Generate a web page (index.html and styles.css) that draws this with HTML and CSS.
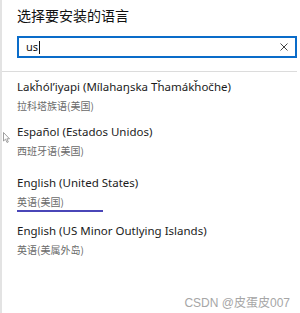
FILE: index.html
```html
<!DOCTYPE html>
<html lang="zh-CN">
<head>
    <meta charset="utf-8">
    <title>选择要安装的语言</title>
    <link rel="stylesheet" href="styles.css">
</head>
<body>
    <main class="lang-panel">
        <h1 class="lang-title">选择要安装的语言</h1>

        <div class="lang-search">
            <span class="search-text">us</span><span class="search-caret"></span>
            <svg class="search-clear" width="10" height="10" viewBox="0 0 10 10" aria-hidden="true">
                <path d="M1.5 1.5 L8.5 8.5 M8.5 1.5 L1.5 8.5" stroke="#444" stroke-width="1" fill="none"/>
            </svg>
        </div>

        <hr class="lang-divider">

        <ul class="lang-list">
            <li class="lang-item">
                <p class="lang-name">Lakȟól’iyapi (Mílahaŋska Tȟamákȟočhe)</p>
                <p class="lang-sub">拉科塔族语(美国)</p>
            </li>
            <li class="lang-item">
                <p class="lang-name">Español (Estados Unidos)</p>
                <p class="lang-sub">西班牙语(美国)</p>
            </li>
            <li class="lang-item selected">
                <p class="lang-name">English (United States)</p>
                <p class="lang-sub">英语(美国)</p>
                <span class="lang-focus"></span>
            </li>
            <li class="lang-item">
                <p class="lang-name">English (US Minor Outlying Islands)</p>
                <p class="lang-sub">英语(美属外岛)</p>
            </li>
        </ul>

        <!-- pointer left over the list -->
        <svg class="mouse-pointer" width="8" height="12" viewBox="0 0 8 12" aria-hidden="true">
            <path d="M0.5 0.5 L0.5 9 L2.5 7.2 L4 10.5 L5.3 9.9 L3.9 6.8 L6.5 6.8 Z" fill="#fff" stroke="#888" stroke-width="0.8"/>
        </svg>

        <footer class="watermark">CSDN @皮蛋皮007</footer>
    </main>
</body>
</html>
```

FILE: styles.css
```css
* {
    margin: 0;
    padding: 0;
    box-sizing: border-box;
}

body {
    width: 300px;
    height: 313px;
    overflow: hidden;
    background: #ffffff;
    font-family: "Noto Sans", "Noto Sans CJK SC", sans-serif;
    color: #1b1b1b;
}

.lang-panel {
    position: relative;
    height: 313px;
    border-left: 2px solid #e3e3e3;
    display: flex;
    flex-direction: column;
}

.lang-title {
    font-family: "Noto Sans CJK SC", sans-serif;
    font-size: 14px;
    font-weight: 400;
    line-height: 20px;
    margin: 5px 0 0 15px;
    color: #111;
}

.lang-search {
    margin: 11px 3px 0 15px;
    height: 22px;
    border: 2px solid #0a6cc9;
    display: flex;
    align-items: center;
    padding-left: 7px;
    padding-right: 6px;
}

.search-text {
    font-size: 11px;
    line-height: 16px;
    color: #111;
}

.search-caret {
    width: 1px;
    height: 13px;
    background: #111;
    margin-left: 1px;
}

.search-clear {
    margin-left: auto;
}

.lang-divider {
    border: none;
    border-top: 1px solid #dcdcdc;
    margin: 13px 3px 0 0;
}

.lang-list {
    list-style: none;
    padding-top: 5px;
}

.lang-item {
    padding: 0 0 5px 15px;
}

.lang-item:nth-child(2) {
    padding-bottom: 11px;
}

.lang-item.selected {
    padding-bottom: 9px;
}

.lang-name {
    font-size: 11.5px;
    line-height: 19px;
    height: 19px;
    white-space: nowrap;
    color: #1b1b1b;
}

.lang-sub {
    font-family: "Noto Sans CJK SC", sans-serif;
    font-size: 10px;
    line-height: 19px;
    height: 21px;
    color: #6a6a6a;
}

.selected .lang-sub {
    height: 18px;
}

.lang-focus {
    display: block;
    width: 86px;
    height: 2px;
    background: #4a46b8;
}

.mouse-pointer {
    position: absolute;
    left: 1px;
    top: 132px;
}

.watermark {
    position: absolute;
    right: 10px;
    bottom: 3px;
    font-family: "Liberation Sans", "Noto Sans CJK SC", sans-serif;
    font-size: 12px;
    color: #a6a6a6;
}
```
